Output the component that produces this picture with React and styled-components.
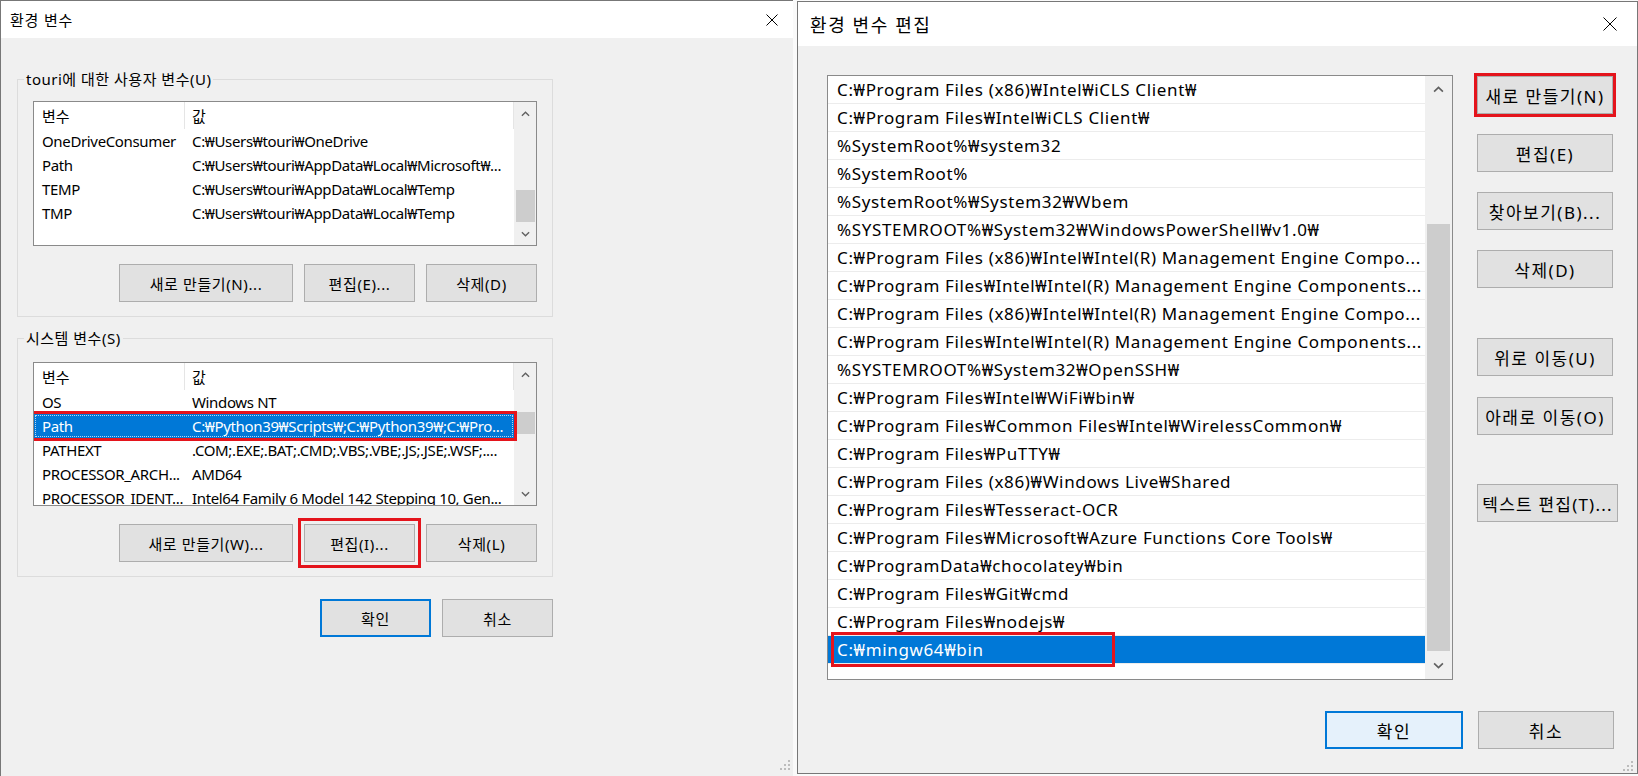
import React from "react";
import styled, { createGlobalStyle, css } from "styled-components";

const SANS = `"Noto Sans", "Noto Sans CJK KR", sans-serif`;
const RED = "#e4141c";
const BLUE = "#0078d7";

const GlobalStyle = createGlobalStyle`
  html, body { margin: 0; padding: 0; background: #fafafa; }
  body { font-family: ${SANS}; color: #000; }
  * { box-sizing: border-box; }
`;

const userVars = [
  ["OneDriveConsumer", "C:₩Users₩touri₩OneDrive"],
  ["Path", "C:₩Users₩touri₩AppData₩Local₩Microsoft₩..."],
  ["TEMP", "C:₩Users₩touri₩AppData₩Local₩Temp"],
  ["TMP", "C:₩Users₩touri₩AppData₩Local₩Temp"],
];

const systemVars = [
  ["OS", "Windows NT"],
  ["Path", "C:₩Python39₩Scripts₩;C:₩Python39₩;C:₩Pro...", true],
  ["PATHEXT", ".COM;.EXE;.BAT;.CMD;.VBS;.VBE;.JS;.JSE;.WSF;...."],
  ["PROCESSOR_ARCH...", "AMD64"],
  ["PROCESSOR_IDENT...", "Intel64 Family 6 Model 142 Stepping 10, Gen..."],
];

const pathEntries = [
  "C:₩Program Files (x86)₩Intel₩iCLS Client₩",
  "C:₩Program Files₩Intel₩iCLS Client₩",
  "%SystemRoot%₩system32",
  "%SystemRoot%",
  "%SystemRoot%₩System32₩Wbem",
  "%SYSTEMROOT%₩System32₩WindowsPowerShell₩v1.0₩",
  "C:₩Program Files (x86)₩Intel₩Intel(R) Management Engine Compo...",
  "C:₩Program Files₩Intel₩Intel(R) Management Engine Components...",
  "C:₩Program Files (x86)₩Intel₩Intel(R) Management Engine Compo...",
  "C:₩Program Files₩Intel₩Intel(R) Management Engine Components...",
  "%SYSTEMROOT%₩System32₩OpenSSH₩",
  "C:₩Program Files₩Intel₩WiFi₩bin₩",
  "C:₩Program Files₩Common Files₩Intel₩WirelessCommon₩",
  "C:₩Program Files₩PuTTY₩",
  "C:₩Program Files (x86)₩Windows Live₩Shared",
  "C:₩Program Files₩Tesseract-OCR",
  "C:₩Program Files₩Microsoft₩Azure Functions Core Tools₩",
  "C:₩ProgramData₩chocolatey₩bin",
  "C:₩Program Files₩Git₩cmd",
  "C:₩Program Files₩nodejs₩",
  "C:₩mingw64₩bin",
];

const Screen = styled.div`
  display: flex;
  align-items: flex-start;
  gap: 4px;
  width: 1638px;
  height: 776px;
  overflow: hidden;
  background: #fafafa;
`;

const Window = styled.section`
  flex: none;
  display: flex;
  flex-direction: column;
  width: ${(p) => p.$w}px;
  height: ${(p) => p.$h}px;
  margin-top: ${(p) => p.$mt || 0}px;
  background: #f0f0f0;
  border: 1px solid #777;
  ${(p) =>
    p.$open &&
    css`
      border-right: none;
      border-bottom: none;
    `}
`;

const TitleBar = styled.header`
  flex: none;
  display: flex;
  align-items: center;
  justify-content: space-between;
  height: ${(p) => p.$h}px;
  padding: 0 ${(p) => p.$pr}px 0 ${(p) => p.$pl}px;
  background: #fff;
  font-size: ${(p) => p.$fs}px;
  letter-spacing: ${(p) => p.$ls || 0}px;
`;

const EnvBody = styled.div`
  flex: 1;
  display: flex;
  flex-direction: column;
  padding: 41px 0 0 16px;
`;

const Group = styled.div`
  display: flex;
  flex-direction: column;
  width: 536px;
  border: 1px solid #dcdcdc;
  padding: 0 15px 14px 15px;
  margin-top: ${(p) => p.$mt || 0}px;
`;

const GroupLabel = styled.div`
  align-self: flex-start;
  height: 20px;
  line-height: 20px;
  margin: -11px 0 0 -9px;
  padding: 0 2px;
  background: #f0f0f0;
  font-size: 15px;
  letter-spacing: 0.5px;
`;

const ListBox = styled.div`
  flex: none;
  display: flex;
  height: ${(p) => p.$h}px;
  margin-top: ${(p) => p.$mt}px;
  border: 1px solid #8a8a8a;
  background: #fff;
  overflow: hidden;
`;

const ListContent = styled.div`
  flex: 1;
  min-width: 0;
  display: flex;
  flex-direction: column;
`;

const HeaderRow = styled.div`
  flex: none;
  display: flex;
  height: 27px;
  font-size: 15px;
`;

const Cell = styled.div`
  flex: ${(p) => (p.$w ? "none" : 1)};
  width: ${(p) => (p.$w ? `${p.$w}px` : "auto")};
  min-width: 0;
  display: flex;
  align-items: center;
  padding-left: ${(p) => (p.$first ? 8 : 7)}px;
  white-space: nowrap;
  overflow: hidden;
  ${(p) =>
    p.$head &&
    css`
      border-right: 1px solid #e5e5e5;
    `}
`;

const VarRow = styled.div`
  flex: none;
  position: relative;
  display: flex;
  height: 24px;
  font-size: 15px;
  letter-spacing: -0.35px;
  ${(p) =>
    p.$selected &&
    css`
      z-index: 1;
      background: ${BLUE};
      color: #fff;
      outline: 3px solid ${RED};
      &::after {
        content: "";
        position: absolute;
        inset: 1px;
        border: 1px dotted rgba(255, 255, 255, 0.7);
      }
    `}
`;

const ScrollTrack = styled.div`
  flex: none;
  display: flex;
  flex-direction: column;
  align-items: center;
  width: ${(p) => p.$w}px;
  background: #f0f0f0;
`;

const ScrollArrow = styled.div`
  flex: none;
  display: flex;
  align-items: center;
  justify-content: center;
  width: 100%;
  height: ${(p) => p.$h}px;
`;

const ScrollRail = styled.div`
  flex: 1;
  display: flex;
  flex-direction: column;
  align-items: center;
  width: 100%;
`;

const Thumb = styled.div`
  flex: none;
  width: ${(p) => p.$w}px;
  height: ${(p) => p.$h}px;
  margin-top: ${(p) => p.$top}px;
  background: #cdcdcd;
`;

const ButtonRow = styled.div`
  display: flex;
  justify-content: flex-end;
  gap: 11px;
  margin-top: 18px;
`;

const Button = styled.button`
  flex: none;
  width: ${(p) => p.$w}px;
  height: ${(p) => p.$h || 38}px;
  margin-top: ${(p) => p.$mt || 0}px;
  padding: 0;
  font-family: ${SANS};
  font-size: ${(p) => p.$fs || 15}px;
  letter-spacing: ${(p) => p.$ls ?? 0.6}px;
  color: #000;
  white-space: nowrap;
  background: ${(p) => (p.$default ? p.$bg || "#e1e1e1" : "#e1e1e1")};
  border: ${(p) => (p.$default ? `2px solid ${BLUE}` : "1px solid #adadad")};
  ${(p) =>
    p.$marked &&
    css`
      outline: 3px solid ${RED};
      outline-offset: ${p.$offset}px;
    `}
`;

const Footer = styled.div`
  display: flex;
  justify-content: flex-end;
  gap: 11px;
  width: 536px;
  margin-top: 22px;
`;

const GripIcon = styled.svg`
  flex: none;
  align-self: flex-end;
  margin: auto ${(p) => p.$mr}px ${(p) => p.$mb}px 0;
`;

const EditBody = styled.div`
  display: grid;
  grid-template-columns: 626px 141px;
  grid-template-rows: 605px auto;
  column-gap: 24px;
  padding: 29px 0 0 29px;
`;

const PathRow = styled.div`
  flex: none;
  display: flex;
  align-items: center;
  height: 28px;
  padding-left: 7px;
  font-size: 17px;
  letter-spacing: 0.65px;
  white-space: nowrap;
  overflow: ${(p) => (p.$selected ? "visible" : "hidden")};
  border-bottom: 1px solid #ececec;
  ${(p) =>
    p.$selected &&
    css`
      background: ${BLUE};
      color: #fff;
    `}
`;

const PathText = styled.span`
  display: inline-flex;
  align-items: center;
  height: 27px;
  padding-left: 2px;
  ${(p) =>
    p.$marked &&
    css`
      width: 276px;
      outline: 3px solid ${RED};
      outline-offset: 1px;
    `}
`;

const SideButtons = styled.div`
  display: flex;
  flex-direction: column;
  align-items: flex-start;
`;

const EditFooter = styled.div`
  grid-column: 1 / -1;
  display: flex;
  justify-content: flex-end;
  gap: 15px;
  margin-top: 31px;
  padding-right: 4px;
`;

const CloseIcon = ({ size }) => (
  <svg width={size} height={size} viewBox={`0 0 ${size} ${size}`}>
    <path
      d={`M0.5 0.5 L${size - 0.5} ${size - 0.5} M${size - 0.5} 0.5 L0.5 ${size - 0.5}`}
      stroke="#000"
      strokeWidth="1"
      fill="none"
    />
  </svg>
);

const Chevron = ({ up, w = 9, color = "#606060" }) => (
  <svg width={w} height={Math.round(w / 2) + 1} viewBox="0 0 10 6">
    <polyline
      points={up ? "1,5 5,1 9,5" : "1,1 5,5 9,1"}
      stroke={color}
      strokeWidth="1.5"
      fill="none"
    />
  </svg>
);

const Grip = ({ mr, mb }) => (
  <GripIcon $mr={mr} $mb={mb} width="10" height="10" viewBox="0 0 10 10">
    {[
      [8, 0],
      [4, 4],
      [8, 4],
      [0, 8],
      [4, 8],
      [8, 8],
    ].map(([x, y]) => (
      <rect key={`${x}-${y}`} x={x} y={y} width="2" height="2" fill="#bcbcbc" />
    ))}
  </GripIcon>
);

const ScrollBar = ({ w, arrow, thumb, chevron }) => (
  <ScrollTrack $w={w}>
    <ScrollArrow $h={arrow}>
      <Chevron up w={chevron} />
    </ScrollArrow>
    <ScrollRail>
      <Thumb $w={thumb.w} $h={thumb.h} $top={thumb.top} />
    </ScrollRail>
    <ScrollArrow $h={arrow}>
      <Chevron w={chevron} />
    </ScrollArrow>
  </ScrollTrack>
);

const VarList = ({ height, top, rows, thumb }) => (
  <ListBox $h={height} $mt={top}>
    <ListContent>
      <HeaderRow>
        <Cell $w={151} $first $head>
          변수
        </Cell>
        <Cell $head>값</Cell>
      </HeaderRow>
      {rows.map(([name, value, selected]) => (
        <VarRow key={name + value} $selected={selected}>
          <Cell $w={151} $first>
            {name}
          </Cell>
          <Cell>{value}</Cell>
        </VarRow>
      ))}
    </ListContent>
    <ScrollBar w={22} arrow={23} chevron={9} thumb={{ w: 19, ...thumb }} />
  </ListBox>
);

const EnvironmentDialog = () => (
  <Window $w={793} $h={776} $open>
    <TitleBar $h={37} $pl={9} $pr={15} $fs={15} $ls={0.8}>
      <span>환경 변수</span>
      <CloseIcon size={12} />
    </TitleBar>
    <EnvBody>
      <Group>
        <GroupLabel>touri에 대한 사용자 변수(U)</GroupLabel>
        <VarList height={145} top={12} rows={userVars} thumb={{ top: 65, h: 32 }} />
        <ButtonRow>
          <Button $w={174}>새로 만들기(N)...</Button>
          <Button $w={111}>편집(E)...</Button>
          <Button $w={111}>삭제(D)</Button>
        </ButtonRow>
      </Group>
      <Group $mt={21}>
        <GroupLabel>시스템 변수(S)</GroupLabel>
        <VarList height={144} top={14} rows={systemVars} thumb={{ top: 26, h: 22 }} />
        <ButtonRow>
          <Button $w={174}>새로 만들기(W)...</Button>
          <Button $w={111} $marked $offset={3}>
            편집(I)...
          </Button>
          <Button $w={111}>삭제(L)</Button>
        </ButtonRow>
      </Group>
      <Footer>
        <Button $w={111} $default>
          확인
        </Button>
        <Button $w={111}>취소</Button>
      </Footer>
      <Grip mr={3} mb={6} />
    </EnvBody>
  </Window>
);

const EditDialog = () => (
  <Window $w={841} $h={773} $mt={1}>
    <TitleBar $h={44} $pl={12} $pr={20} $fs={18} $ls={1.6}>
      <span>환경 변수 편집</span>
      <CloseIcon size={14} />
    </TitleBar>
    <EditBody>
      <ListBox $h={605} $mt={0}>
        <ListContent>
          {pathEntries.map((entry, i) => {
            const last = i === pathEntries.length - 1;
            return (
              <PathRow key={entry + i} $selected={last}>
                <PathText $marked={last}>{entry}</PathText>
              </PathRow>
            );
          })}
        </ListContent>
        <ScrollBar w={27} arrow={27} chevron={11} thumb={{ w: 23, top: 121, h: 427 }} />
      </ListBox>
      <SideButtons>
        <Button $w={136} $fs={17} $ls={1.5} $mt={1} $marked $offset={0}>
          새로 만들기(N)
        </Button>
        <Button $w={136} $fs={17} $ls={1.5} $mt={20}>
          편집(E)
        </Button>
        <Button $w={136} $fs={17} $ls={1.5} $mt={20}>
          찾아보기(B)...
        </Button>
        <Button $w={136} $fs={17} $ls={1.5} $mt={20}>
          삭제(D)
        </Button>
        <Button $w={136} $fs={17} $ls={1.5} $mt={50}>
          위로 이동(U)
        </Button>
        <Button $w={136} $fs={17} $ls={1.5} $mt={21}>
          아래로 이동(O)
        </Button>
        <Button $w={141} $fs={17} $ls={1.2} $mt={49}>
          텍스트 편집(T)...
        </Button>
      </SideButtons>
      <EditFooter>
        <Button $w={138} $fs={17} $ls={1.5} $default $bg="#e5f1fb">
          확인
        </Button>
        <Button $w={136} $fs={17} $ls={1.5}>
          취소
        </Button>
      </EditFooter>
    </EditBody>
    <Grip mr={4} mb={2} />
  </Window>
);

export default function App() {
  return (
    <>
      <GlobalStyle />
      <Screen>
        <EnvironmentDialog />
        <EditDialog />
      </Screen>
    </>
  );
}
